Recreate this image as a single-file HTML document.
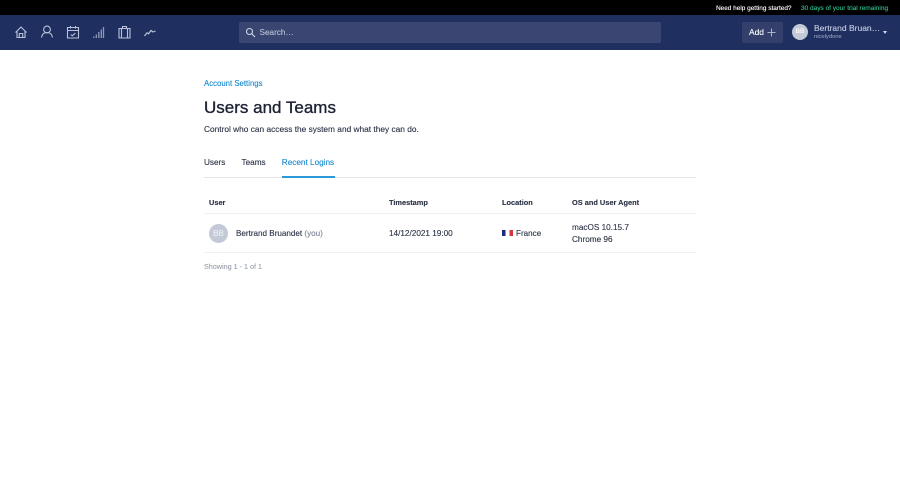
<!DOCTYPE html>
<html lang="en"><head><meta charset="utf-8"><title>Users and Teams</title>
<style>
html,body{margin:0;padding:0;background:#fff}
body{width:900px;height:484px;overflow:hidden;position:relative;font-family:"Liberation Sans",sans-serif;color:#2b3245}
.a{position:absolute;white-space:nowrap;line-height:1;-webkit-text-stroke:.12px currentColor}
</style></head><body>
<div class="a" style="left:0;top:0;width:900px;height:15px;background:#000"></div>
<div class="a" style="left:716px;top:5.500px;font-size:6.45px;color:#fff">Need help getting started?</div>
<div class="a" style="left:801px;top:5.500px;font-size:6.5px;color:#2fc08a">30 days of your trial remaining</div>
<div class="a" style="left:0;top:15px;width:900px;height:35px;background:#1f2f5f"></div>
<svg class="a" style="left:0;top:15px" width="180" height="35" fill="none" stroke="#b9c2da" stroke-width="1.1">
<path d="M15.5 17.5 21 12l5.500 5.500M17 16.500V22.500h8v-6h0M19.300 22.500v-4h3.400v4"/>
<circle cx="47" cy="14.500" r="3.400"/><path d="M41.500 22.500c.6-3.500 2.800-5 5.500-5s4.900 1.500 5.500 5"/>
<path d="M67.500 12.500h11v10.500h-11zM67.500 15.500h11M70.500 11v2.500M75.500 11v2.500M70.800 19.500l1.500 1.300 3-2.600"/>
<path stroke-width="1.3" stroke="#8f9abb" d="M93.800 21.500v1.500M96.300 19.500v3.500M98.800 17v6M101.300 14.500v8.500M103.500 12v11"/>
<path d="M119 13.500h11v9.500h-11zM121.500 13.500v9.500M127.500 13.500v9.500M122.500 13.500v-2h4v2"/>
<path stroke-width="1.2" d="M144.500 21l2.500-3.200 1.500 1 2.500-3.300 2 1.500 2.500-1"/>
</svg>
<div class="a" style="left:239px;top:22px;width:422px;height:21px;background:#3a4571;border-radius:2px"></div>
<svg class="a" style="left:245px;top:27px" width="11" height="11" fill="none" stroke="#d0d6e6" stroke-width="1.100"><circle cx="4.500" cy="4.500" r="3"/><path d="M6.800 6.800 10 10"/></svg>
<div class="a" style="left:259.500px;top:28.500px;font-size:8.200px;color:#b9c0d6">Search…</div>
<div class="a" style="left:742px;top:22px;width:41px;height:21px;background:#343f6c;border-radius:2px"></div>
<div class="a" style="left:749px;top:28.300px;font-size:8.400px;color:#fff">Add</div>
<svg class="a" style="left:767px;top:28px" width="9" height="9" stroke="#aeb6cf" stroke-width="1"><path d="M4.500 .5v8M.5 4.500h8"/></svg>
<div class="a" style="left:792px;top:24px;width:16px;height:16px;border-radius:50%;background:#c3c9d7;color:#fff;font-size:6.500px;line-height:16px;text-align:center">BB</div>
<div class="a" style="left:814px;top:24.300px;font-size:8.500px;color:#c5cde3">Bertrand Bruan…</div>
<div class="a" style="left:814px;top:35.300px;font-size:5.800px;color:#8e98b8">nicelydone</div>
<div class="a" style="left:882.500px;top:31px;width:0;height:0;border-left:2.500px solid transparent;border-right:2.500px solid transparent;border-top:3px solid #d3d9e8"></div>

<div class="a" style="left:204px;top:80px;font-size:7.800px;color:#1a8ad0">Account Settings</div>
<div class="a" style="left:204px;top:99px;font-size:17px;color:#1c2233;-webkit-text-stroke:.35px #1c2233">Users and Teams</div>
<div class="a" style="left:204px;top:125px;font-size:8.330px;color:#2b3245">Control who can access the system and what they can do.</div>
<div class="a" style="left:204px;top:159px;font-size:8.200px;color:#2b3245">Users</div>
<div class="a" style="left:241.500px;top:159px;font-size:8.200px;color:#2b3245">Teams</div>
<div class="a" style="left:281.800px;top:159px;font-size:8.200px;color:#1a8ad0">Recent Logins</div>
<div class="a" style="left:204px;top:177px;width:492px;height:1px;background:#e3e5ea"></div>
<div class="a" style="left:282px;top:176px;width:53px;height:2px;background:#2d9ad8"></div>

<div class="a" style="left:209px;top:198.500px;font-size:7.400px;font-weight:bold;color:#2b3245">User</div>
<div class="a" style="left:389px;top:198.500px;font-size:7.400px;font-weight:bold;color:#2b3245">Timestamp</div>
<div class="a" style="left:502px;top:198.500px;font-size:7.400px;font-weight:bold;color:#2b3245">Location</div>
<div class="a" style="left:572px;top:198.500px;font-size:7.400px;font-weight:bold;color:#2b3245">OS and User Agent</div>
<div class="a" style="left:204px;top:213px;width:492px;height:1px;background:#eff0f3"></div>
<div class="a" style="left:209px;top:224px;width:19px;height:19px;border-radius:50%;background:#c3c9d7;color:#eef0f5;font-size:8px;line-height:19px;text-align:center">BB</div>
<div class="a" style="left:236px;top:229.500px;font-size:8.100px;color:#2b3245">Bertrand Bruandet <span style="color:#7d8597">(you)</span></div>
<div class="a" style="left:389px;top:229.500px;font-size:8.200px;color:#2b3245">14/12/2021 19:00</div>
<div class="a" style="left:502px;top:230px;width:11px;height:6px;background:linear-gradient(90deg,#1d2a80 0 3.700px,#fff 3.700px 7.300px,#d6343e 7.300px)"></div>
<div class="a" style="left:516px;top:229.500px;font-size:8.100px;color:#2b3245">France</div>
<div class="a" style="left:572px;top:223.500px;font-size:8.200px;color:#2b3245">macOS 10.15.7</div>
<div class="a" style="left:572px;top:236px;font-size:8.200px;color:#2b3245">Chrome 96</div>
<div class="a" style="left:204px;top:252px;width:492px;height:1px;background:#eff0f3"></div>
<div class="a" style="left:204px;top:262.500px;font-size:7.200px;color:#9aa0ac">Showing 1 - 1 of 1</div>
</body></html>
